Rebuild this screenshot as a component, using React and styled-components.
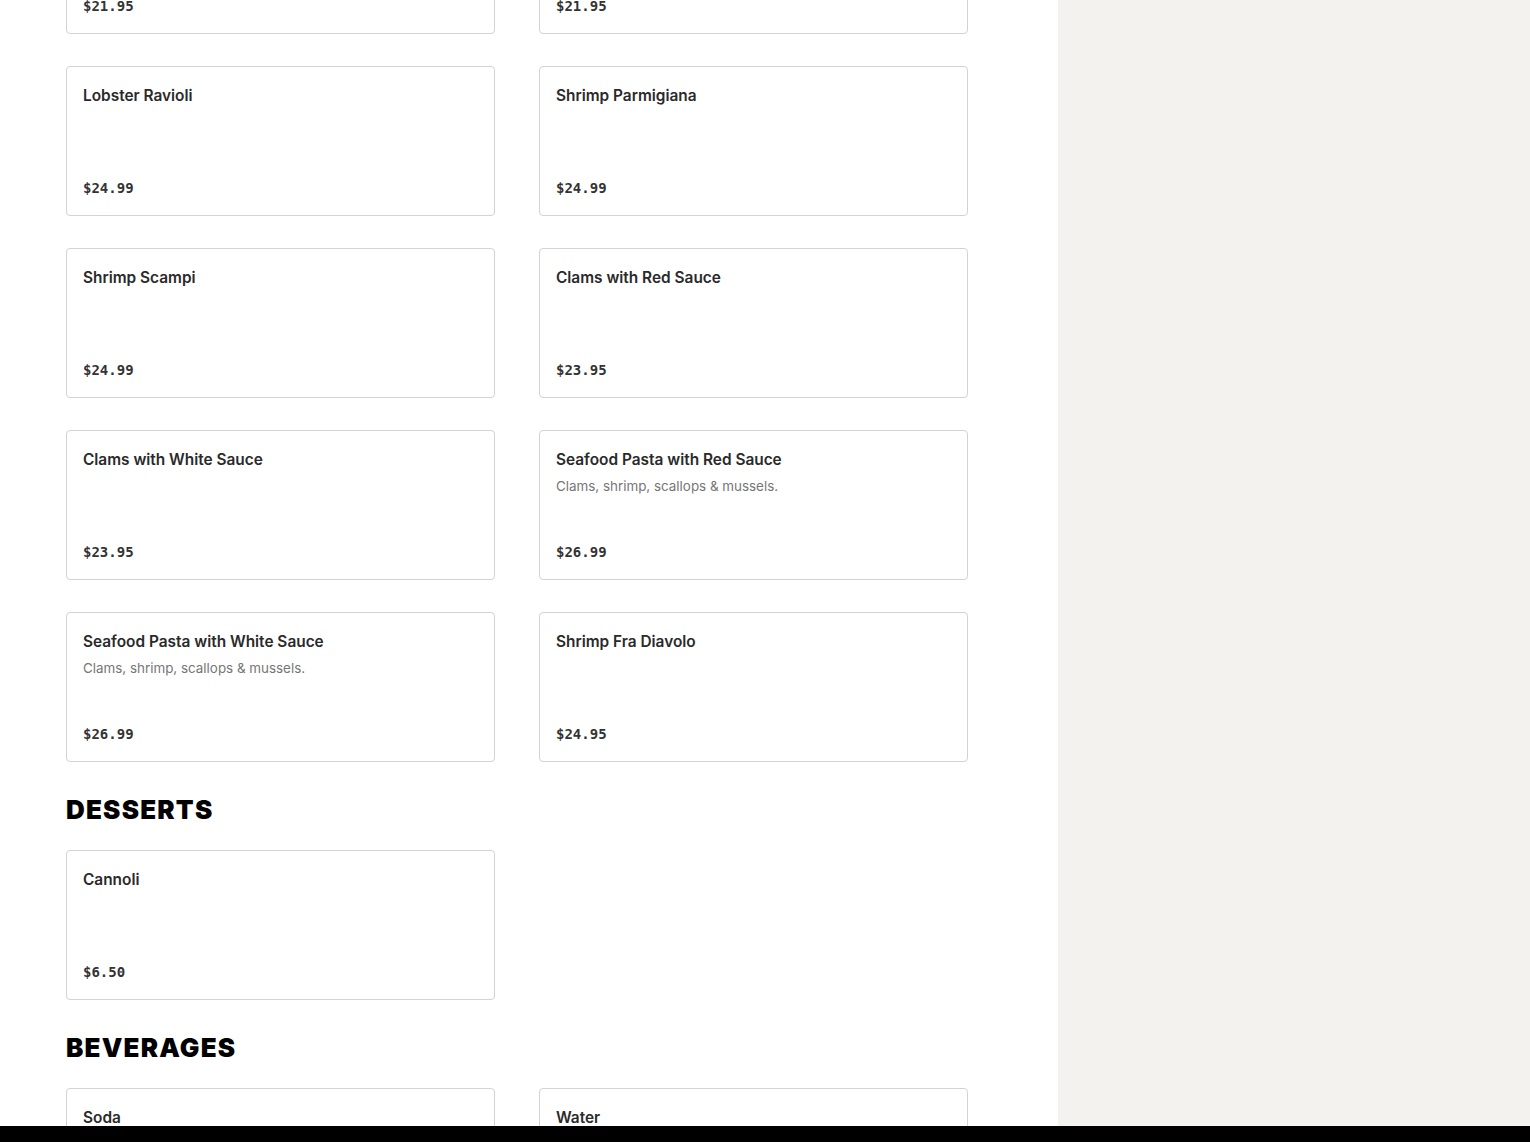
import React, { useLayoutEffect, useRef } from "react";
import styled, { createGlobalStyle } from "styled-components";

const GlobalStyle = createGlobalStyle`
  html, body {
    margin: 0;
    padding: 0;
    background: #ffffff;
  }
  body {
    font-family: Inter, "Liberation Sans", Arial, sans-serif;
    -webkit-font-smoothing: antialiased;
  }
  * {
    box-sizing: border-box;
  }
`;

const Page = styled.div`
  height: 100vh;
  display: flex;
  flex-direction: column;
  overflow: hidden;
`;

const Main = styled.div`
  flex: 1;
  min-height: 0;
  display: flex;
`;

const MenuColumn = styled.div`
  width: 1058px;
  flex-shrink: 0;
  overflow: hidden;
  background: #ffffff;
`;

const MenuInner = styled.div`
  padding: 40px 90px 40px 66px;
`;

const Sidebar = styled.aside`
  flex: 1;
  background: #f3f2ef;
`;

const BottomBar = styled.div`
  height: 16px;
  flex-shrink: 0;
  background: #000000;
`;

const Section = styled.section`
  & + & {
    margin-top: 33px;
  }
`;

const SectionTitle = styled.h2`
  margin: 0 0 25px;
  font-family: Inter, "Liberation Sans", Arial, sans-serif;
  font-weight: 900;
  font-size: 26px;
  line-height: 30px;
  letter-spacing: 1.2px;
  color: #000000;
  text-transform: uppercase;
`;

const Grid = styled.div`
  display: grid;
  grid-template-columns: 429px 429px;
  column-gap: 44px;
  row-gap: 32px;
`;

const Card = styled.div`
  height: 150px;
  display: flex;
  flex-direction: column;
  padding: 19px 16px 17px;
  border: 1px solid #d3d3d3;
  border-radius: 4px;
  background: #ffffff;
`;

const ItemName = styled.div`
  font-size: 15.4px;
  line-height: 20px;
  font-weight: 600;
  color: #2a2a2a;
`;

const ItemDesc = styled.div`
  margin-top: 6px;
  font-size: 13.4px;
  line-height: 20px;
  font-weight: 400;
  color: #767676;
`;

const ItemPrice = styled.div`
  margin-top: auto;
  font-family: "DejaVu Sans Mono", "Liberation Mono", monospace;
  font-size: 14px;
  line-height: 20px;
  font-weight: 700;
  color: #333333;
`;

const menu = [
  {
    title: "Pasta",
    items: [
      { name: "Linguine with Mussels", price: "$21.95" },
      { name: "Linguine with Calamari", price: "$21.95" },
      { name: "Lobster Ravioli", price: "$24.99" },
      { name: "Shrimp Parmigiana", price: "$24.99" },
      { name: "Shrimp Scampi", price: "$24.99" },
      { name: "Clams with Red Sauce", price: "$23.95" },
      { name: "Clams with White Sauce", price: "$23.95" },
      {
        name: "Seafood Pasta with Red Sauce",
        desc: "Clams, shrimp, scallops & mussels.",
        price: "$26.99",
      },
      {
        name: "Seafood Pasta with White Sauce",
        desc: "Clams, shrimp, scallops & mussels.",
        price: "$26.99",
      },
      { name: "Shrimp Fra Diavolo", price: "$24.95" },
    ],
  },
  {
    title: "Desserts",
    items: [{ name: "Cannoli", price: "$6.50" }],
  },
  {
    title: "Beverages",
    items: [
      { name: "Soda", price: "$2.50" },
      { name: "Water", price: "$2.00" },
    ],
  },
];

function MenuItem({ item }) {
  return (
    <Card>
      <ItemName>{item.name}</ItemName>
      {item.desc && <ItemDesc>{item.desc}</ItemDesc>}
      <ItemPrice>{item.price}</ItemPrice>
    </Card>
  );
}

export default function App() {
  const menuRef = useRef(null);

  // the page is shown scrolled part way down the menu
  useLayoutEffect(() => {
    if (menuRef.current) menuRef.current.scrollTop = 211;
  }, []);

  return (
    <Page>
      <GlobalStyle />
      <Main>
        <MenuColumn ref={menuRef}>
          <MenuInner>
            {menu.map((section) => (
              <Section key={section.title}>
                <SectionTitle>{section.title}</SectionTitle>
                <Grid>
                  {section.items.map((item) => (
                    <MenuItem key={item.name} item={item} />
                  ))}
                </Grid>
              </Section>
            ))}
          </MenuInner>
        </MenuColumn>
        <Sidebar />
      </Main>
      <BottomBar />
    </Page>
  );
}
